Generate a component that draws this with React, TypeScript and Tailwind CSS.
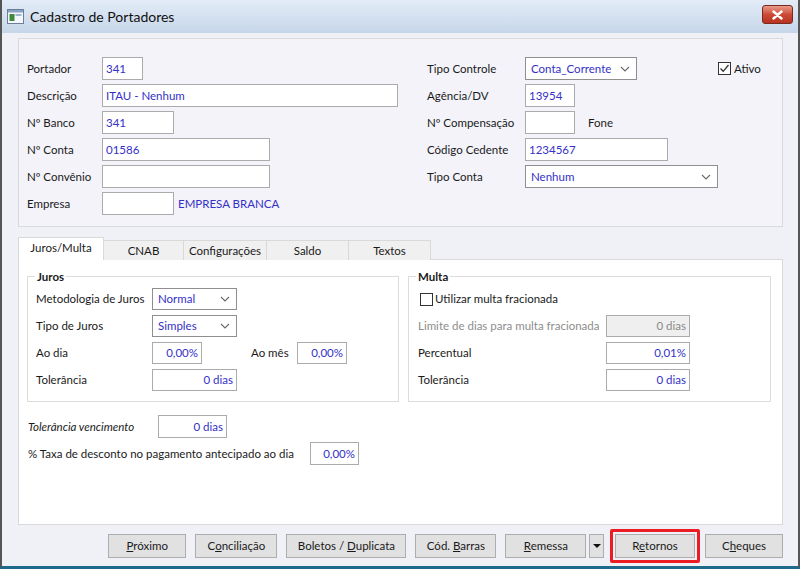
import React from "react";

const blue = "text-[#3430c8]";

function Chevron() {
  return (
    <svg width="10" height="6" viewBox="0 0 10 6" className="shrink-0">
      <path d="M1 1 L5 5 L9 1" fill="none" stroke="#6a6a6a" strokeWidth="1.1" />
    </svg>
  );
}

function Box({
  w,
  value,
  right,
  disabled,
  h = "h-[23px]",
}: {
  w: string;
  value?: string;
  right?: boolean;
  disabled?: boolean;
  h?: string;
}) {
  return (
    <div
      className={`${w} ${h} border border-[#ababab] flex items-center px-[3px] ${
        disabled ? "bg-[#efefef] text-[#8a8a8a]" : `bg-white ${blue}`
      } ${right ? "justify-end" : ""}`}
    >
      {value}
    </div>
  );
}

function Select({ w, value, h = "h-[23px]" }: { w: string; value: string; h?: string }) {
  return (
    <div className={`${w} ${h} border border-[#8f8f8f] bg-white flex items-center justify-between pl-[5px] pr-[6px] ${blue}`}>
      <span>{value}</span>
      <Chevron />
    </div>
  );
}

function CheckBox({ checked }: { checked?: boolean }) {
  return (
    <div className="w-[13px] h-[13px] border border-[#333] bg-white flex items-center justify-center">
      {checked && (
        <svg width="11" height="11" viewBox="0 0 11 11">
          <path d="M1.5 5.5 L4.2 8.3 L9.5 2" fill="none" stroke="#333" strokeWidth="1.3" />
        </svg>
      )}
    </div>
  );
}

function Btn({ w, children }: { w: string; children: React.ReactNode }) {
  return (
    <div className={`${w} h-[24px] border border-[#adadad] bg-[#e1e1e1] flex items-center justify-center text-[#1a1a1a]`}>
      {children}
    </div>
  );
}

function GroupBox({ title, w, children }: { title: string; w: string; children: React.ReactNode }) {
  return (
    <div className={`${w} h-[126px] border border-[#dcdcdc] relative pt-[11px]`}>
      <span className="absolute -top-[9px] left-[7px] bg-white px-[2px] font-bold text-[#1a1a1a]">{title}</span>
      {children}
    </div>
  );
}

export default function App() {
  const labelL = "w-[75px] shrink-0";
  const labelR = "w-[98px] shrink-0";

  return (
    <div className="w-[800px] h-[569px] flex flex-col bg-[#c7d7ea] border-x-2 border-[#555] border-b-[3px] border-b-[#1d6a8a] text-[11.5px] text-[#1a1a1a] font-['Lato',sans-serif] whitespace-nowrap overflow-hidden">
      {/* title bar */}
      <div className="h-[33px] shrink-0 flex items-center bg-gradient-to-b from-[#e3ecf7] to-[#c6d6e9] pl-[5px] pr-[5px]">
        <svg width="17" height="15" viewBox="0 0 17 15" className="mr-[6px]">
          <rect x="0.5" y="0.5" width="16" height="14" fill="#f4f7fb" stroke="#6b7f99" />
          <rect x="1" y="1" width="15" height="2.5" fill="#8aa2c4" />
          <rect x="2.5" y="5" width="5" height="7" fill="#3f8a3a" />
          <rect x="8.5" y="5" width="6" height="2" fill="#9fb4cf" />
        </svg>
        <span className="text-[14px] text-[#101010]">Cadastro de Portadores</span>
        <div className="ml-auto mb-[4px] w-[31px] h-[19px] rounded-[3px] border border-[#7a2a20] bg-gradient-to-b from-[#e79a8a] via-[#cc4b36] to-[#b8321f] flex items-center justify-center">
          <svg width="11" height="10" viewBox="0 0 11 10">
            <path d="M1.5 1.5 L9.5 8.5 M9.5 1.5 L1.5 8.5" stroke="#fff" strokeWidth="2.4" strokeLinecap="round" />
          </svg>
        </div>
      </div>

      {/* client area */}
      <div className="flex-1 bg-[#f0f0f7] flex flex-col pl-[16px] pr-[15px] pt-[5px]">
        {/* top group */}
        <div className="h-[189px] border border-[#dadada] bg-[#f3f3f9] flex pl-[8px] pt-[18px]">
          <div className="w-[400px] flex flex-col gap-[4px]">
            <div className="flex items-center h-[23px]">
              <span className={labelL}>Portador</span>
              <Box w="w-[41px]" value="341" />
            </div>
            <div className="flex items-center h-[23px]">
              <span className={labelL}>Descrição</span>
              <Box w="w-[296px]" value="ITAU - Nenhum" />
            </div>
            <div className="flex items-center h-[23px]">
              <span className={labelL}>Nº Banco</span>
              <Box w="w-[72px]" value="341" />
            </div>
            <div className="flex items-center h-[23px]">
              <span className={labelL}>Nº Conta</span>
              <Box w="w-[168px]" value="01586" />
            </div>
            <div className="flex items-center h-[23px]">
              <span className={labelL}>Nº Convênio</span>
              <Box w="w-[168px]" />
            </div>
            <div className="flex items-center h-[23px]">
              <span className={labelL}>Empresa</span>
              <Box w="w-[72px]" />
              <span className={`ml-[4px] ${blue}`}>EMPRESA BRANCA</span>
            </div>
          </div>
          <div className="flex flex-col gap-[4px]">
            <div className="flex items-center h-[23px]">
              <span className={labelR}>Tipo Controle</span>
              <Select w="w-[112px]" value="Conta_Corrente" />
              <div className="ml-[81px] flex items-center gap-[3px]">
                <CheckBox checked />
                <span>Ativo</span>
              </div>
            </div>
            <div className="flex items-center h-[23px]">
              <span className={labelR}>Agência/DV</span>
              <Box w="w-[50px]" value="13954" />
            </div>
            <div className="flex items-center h-[23px]">
              <span className={labelR}>Nº Compensação</span>
              <Box w="w-[50px]" />
              <span className="ml-[13px]">Fone</span>
            </div>
            <div className="flex items-center h-[23px]">
              <span className={labelR}>Código Cedente</span>
              <Box w="w-[143px]" value="1234567" />
            </div>
            <div className="flex items-center h-[23px]">
              <span className={labelR}>Tipo Conta</span>
              <Select w="w-[193px]" value="Nenhum" />
            </div>
          </div>
        </div>

        {/* tabs */}
        <div className="mt-[10px] flex items-end h-[23px] relative z-10">
          <div className="w-[86px] h-[23px] bg-white border border-[#d9d9d9] border-b-0 flex items-center justify-center pb-[2px]">
            Juros/Multa
          </div>
          {["CNAB", "Configurações", "Saldo", "Textos"].map((t, i) => (
            <div
              key={t}
              className={`h-[20px] bg-[#f0f0f0] border border-[#d9d9d9] border-l-0 border-b-0 flex items-center justify-center ${
                ["w-[80px]", "w-[83px]", "w-[82px]", "w-[82px]"][i]
              }`}
            >
              {t}
            </div>
          ))}
        </div>
        <div className="h-[266px] -mt-[1px] bg-white border border-[#d9d9d9] pl-[8px] pt-[16px] pr-[10px]">
          <div className="flex gap-[9px]">
            <GroupBox title="Juros" w="w-[372px]">
              <div className="flex flex-col gap-[5px] pl-[8px]">
                <div className="flex items-center h-[22px]">
                  <span className="w-[116px]">Metodologia de Juros</span>
                  <Select w="w-[85px]" h="h-[22px]" value="Normal" />
                </div>
                <div className="flex items-center h-[22px]">
                  <span className="w-[116px]">Tipo de Juros</span>
                  <Select w="w-[85px]" h="h-[22px]" value="Simples" />
                </div>
                <div className="flex items-center h-[22px]">
                  <span className="w-[116px]">Ao dia</span>
                  <Box w="w-[50px]" h="h-[22px]" value="0,00%" right />
                  <span className="ml-[49px] w-[46px]">Ao mês</span>
                  <Box w="w-[50px]" h="h-[22px]" value="0,00%" right />
                </div>
                <div className="flex items-center h-[22px]">
                  <span className="w-[116px]">Tolerância</span>
                  <Box w="w-[85px]" h="h-[22px]" value="0 dias" right />
                </div>
              </div>
            </GroupBox>
            <GroupBox title="Multa" w="w-[363px]">
              <div className="flex flex-col gap-[5px] pl-[9px]">
                <div className="flex items-center h-[22px] gap-[2px] pl-[2px]">
                  <CheckBox />
                  <span>Utilizar multa fracionada</span>
                </div>
                <div className="flex items-center h-[22px]">
                  <span className="w-[188px] text-[#8d8d8d]">Limite de dias para multa fracionada</span>
                  <Box w="w-[84px]" h="h-[22px]" value="0 dias" right disabled />
                </div>
                <div className="flex items-center h-[22px]">
                  <span className="w-[188px]">Percentual</span>
                  <Box w="w-[84px]" h="h-[22px]" value="0,01%" right />
                </div>
                <div className="flex items-center h-[22px]">
                  <span className="w-[188px]">Tolerância</span>
                  <Box w="w-[84px]" h="h-[22px]" value="0 dias" right />
                </div>
              </div>
            </GroupBox>
          </div>
          <div className="mt-[13px] flex flex-col gap-[4px] pl-[1px]">
            <div className="flex items-center h-[23px]">
              <span className="w-[130px] italic">Tolerância vencimento</span>
              <Box w="w-[69px]" value="0 dias" right />
            </div>
            <div className="flex items-center h-[23px]">
              <span className="w-[282px]">% Taxa de desconto no pagamento antecipado ao dia</span>
              <Box w="w-[49px]" value="0,00%" right />
            </div>
          </div>
        </div>

        {/* buttons */}
        <div className="mt-[9px] h-[24px] flex items-center pl-[90px]">
          <Btn w="w-[81px]">
            <span><u>P</u>róximo</span>
          </Btn>
          <div className="ml-[9px]">
            <Btn w="w-[82px]">
              <span>C<u>o</u>nciliação</span>
            </Btn>
          </div>
          <div className="ml-[9px]">
            <Btn w="w-[120px]">
              <span>Boletos / <u>D</u>uplicata</span>
            </Btn>
          </div>
          <div className="ml-[9px]">
            <Btn w="w-[81px]">
              <span>Cód. <u>B</u>arras</span>
            </Btn>
          </div>
          <div className="ml-[9px]">
            <Btn w="w-[81px]">
              <span><u>R</u>emessa</span>
            </Btn>
          </div>
          <div className="ml-[3px] w-[15px] h-[24px] border border-[#adadad] bg-[#e1e1e1] flex items-center justify-center">
            <svg width="8" height="4" viewBox="0 0 8 4">
              <path d="M0 0 L8 0 L4 4 Z" fill="#111" />
            </svg>
          </div>
          <div className="ml-[6px] h-[34px] border-[3px] border-[#ec1c24] rounded-[2px] flex items-center px-[2px]">
            <Btn w="w-[80px]">
              <span>R<u>e</u>tornos</span>
            </Btn>
          </div>
          <div className="ml-[5px]">
            <Btn w="w-[78px]">
              <span>C<u>h</u>eques</span>
            </Btn>
          </div>
        </div>
      </div>
    </div>
  );
}
